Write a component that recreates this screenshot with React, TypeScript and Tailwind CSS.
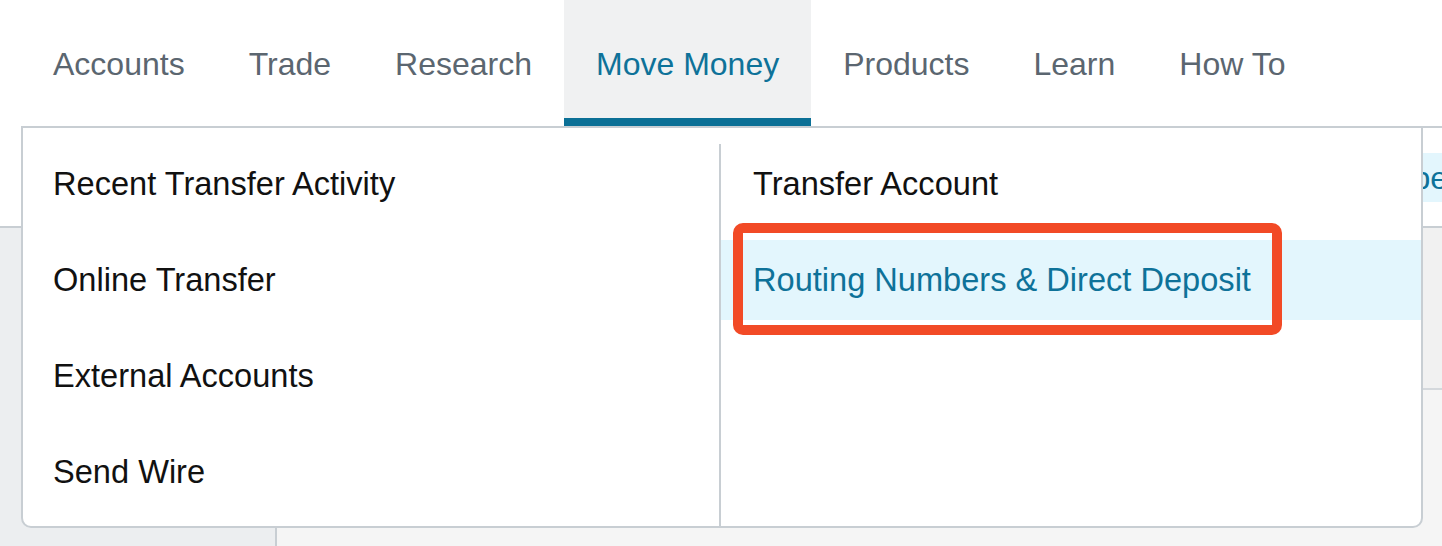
import React from 'react';

const navItems = ['Accounts', 'Trade', 'Research', 'Move Money', 'Products', 'Learn', 'How To'];
const leftLinks = ['Recent Transfer Activity', 'Online Transfer', 'External Accounts', 'Send Wire'];

export default function App() {
  const active = 'Move Money';

  return (
    <div className="relative w-[1442px] h-[546px] overflow-hidden bg-white font-['Liberation_Sans',Arial,sans-serif]">
      {/* top navigation */}
      <nav className="flex h-[126px] pl-[21px]">
        {navItems.map(item => (
          <div
            key={item}
            className={
              item === active
                ? 'flex items-center px-[32px] pt-[9px] text-[32px] bg-[#f0f1f2] text-[#0e7299] border-b-[8px] border-[#0b7096]'
                : 'flex items-center px-[32px] pt-[9px] text-[32px] text-[#5b6670] border-b-[8px] border-transparent'
            }
          >
            {item}
          </div>
        ))}
      </nav>

      {/* page behind the menu */}
      <div className="ml-[21px] h-[100px] border-t-2 border-[#c8ced3] pt-[25px]">
        <div className="h-[49px] bg-[#e3f6fd] flex justify-end items-center overflow-hidden">
          <span className="text-[32px] text-[#0e7299] mr-[-6px]">pe</span>
        </div>
      </div>
      <div className="flex h-[320px] border-t-2 border-[#c8ced3]">
        <div className="w-[277px] bg-[#eceef0] border-r-2 border-[#c8ced3]" />
        <div className="flex-1 flex flex-col bg-[#f5f5f5]">
          <div className="h-[162px] bg-[#f1f1f1] border-b-2 border-[#d4d8dc]" />
        </div>
      </div>

      {/* dropdown menu */}
      <div className="absolute left-[21px] top-[126px] w-[1402px] h-[402px] flex bg-white border-2 border-[#c8ced3] rounded-b-[10px]">
        <div className="w-[696px] pl-[30px] pt-2 flex flex-col">
          {leftLinks.map(link => (
            <div key={link} className="h-[96px] flex items-center text-[32.6px] text-[#111111]">
              {link}
            </div>
          ))}
        </div>
        <div className="flex-1 mt-[16px] border-l-2 border-[#c8ced3] flex flex-col gap-4">
          <div className="h-[80px] flex items-center pl-[32px] text-[32.6px] text-[#111111]">Transfer Account</div>
          <div className="h-[80px] flex items-center pl-[32px] text-[32.6px] text-[#0e7299] bg-[#e3f6fd]">
            Routing Numbers &amp; Direct Deposit
          </div>
        </div>
      </div>

      {/* highlight annotation */}
      <div className="absolute left-[733px] top-[223px] w-[549px] h-[112px] border-[10px] border-[#f24a26] rounded-[10px]" />
    </div>
  );
}
